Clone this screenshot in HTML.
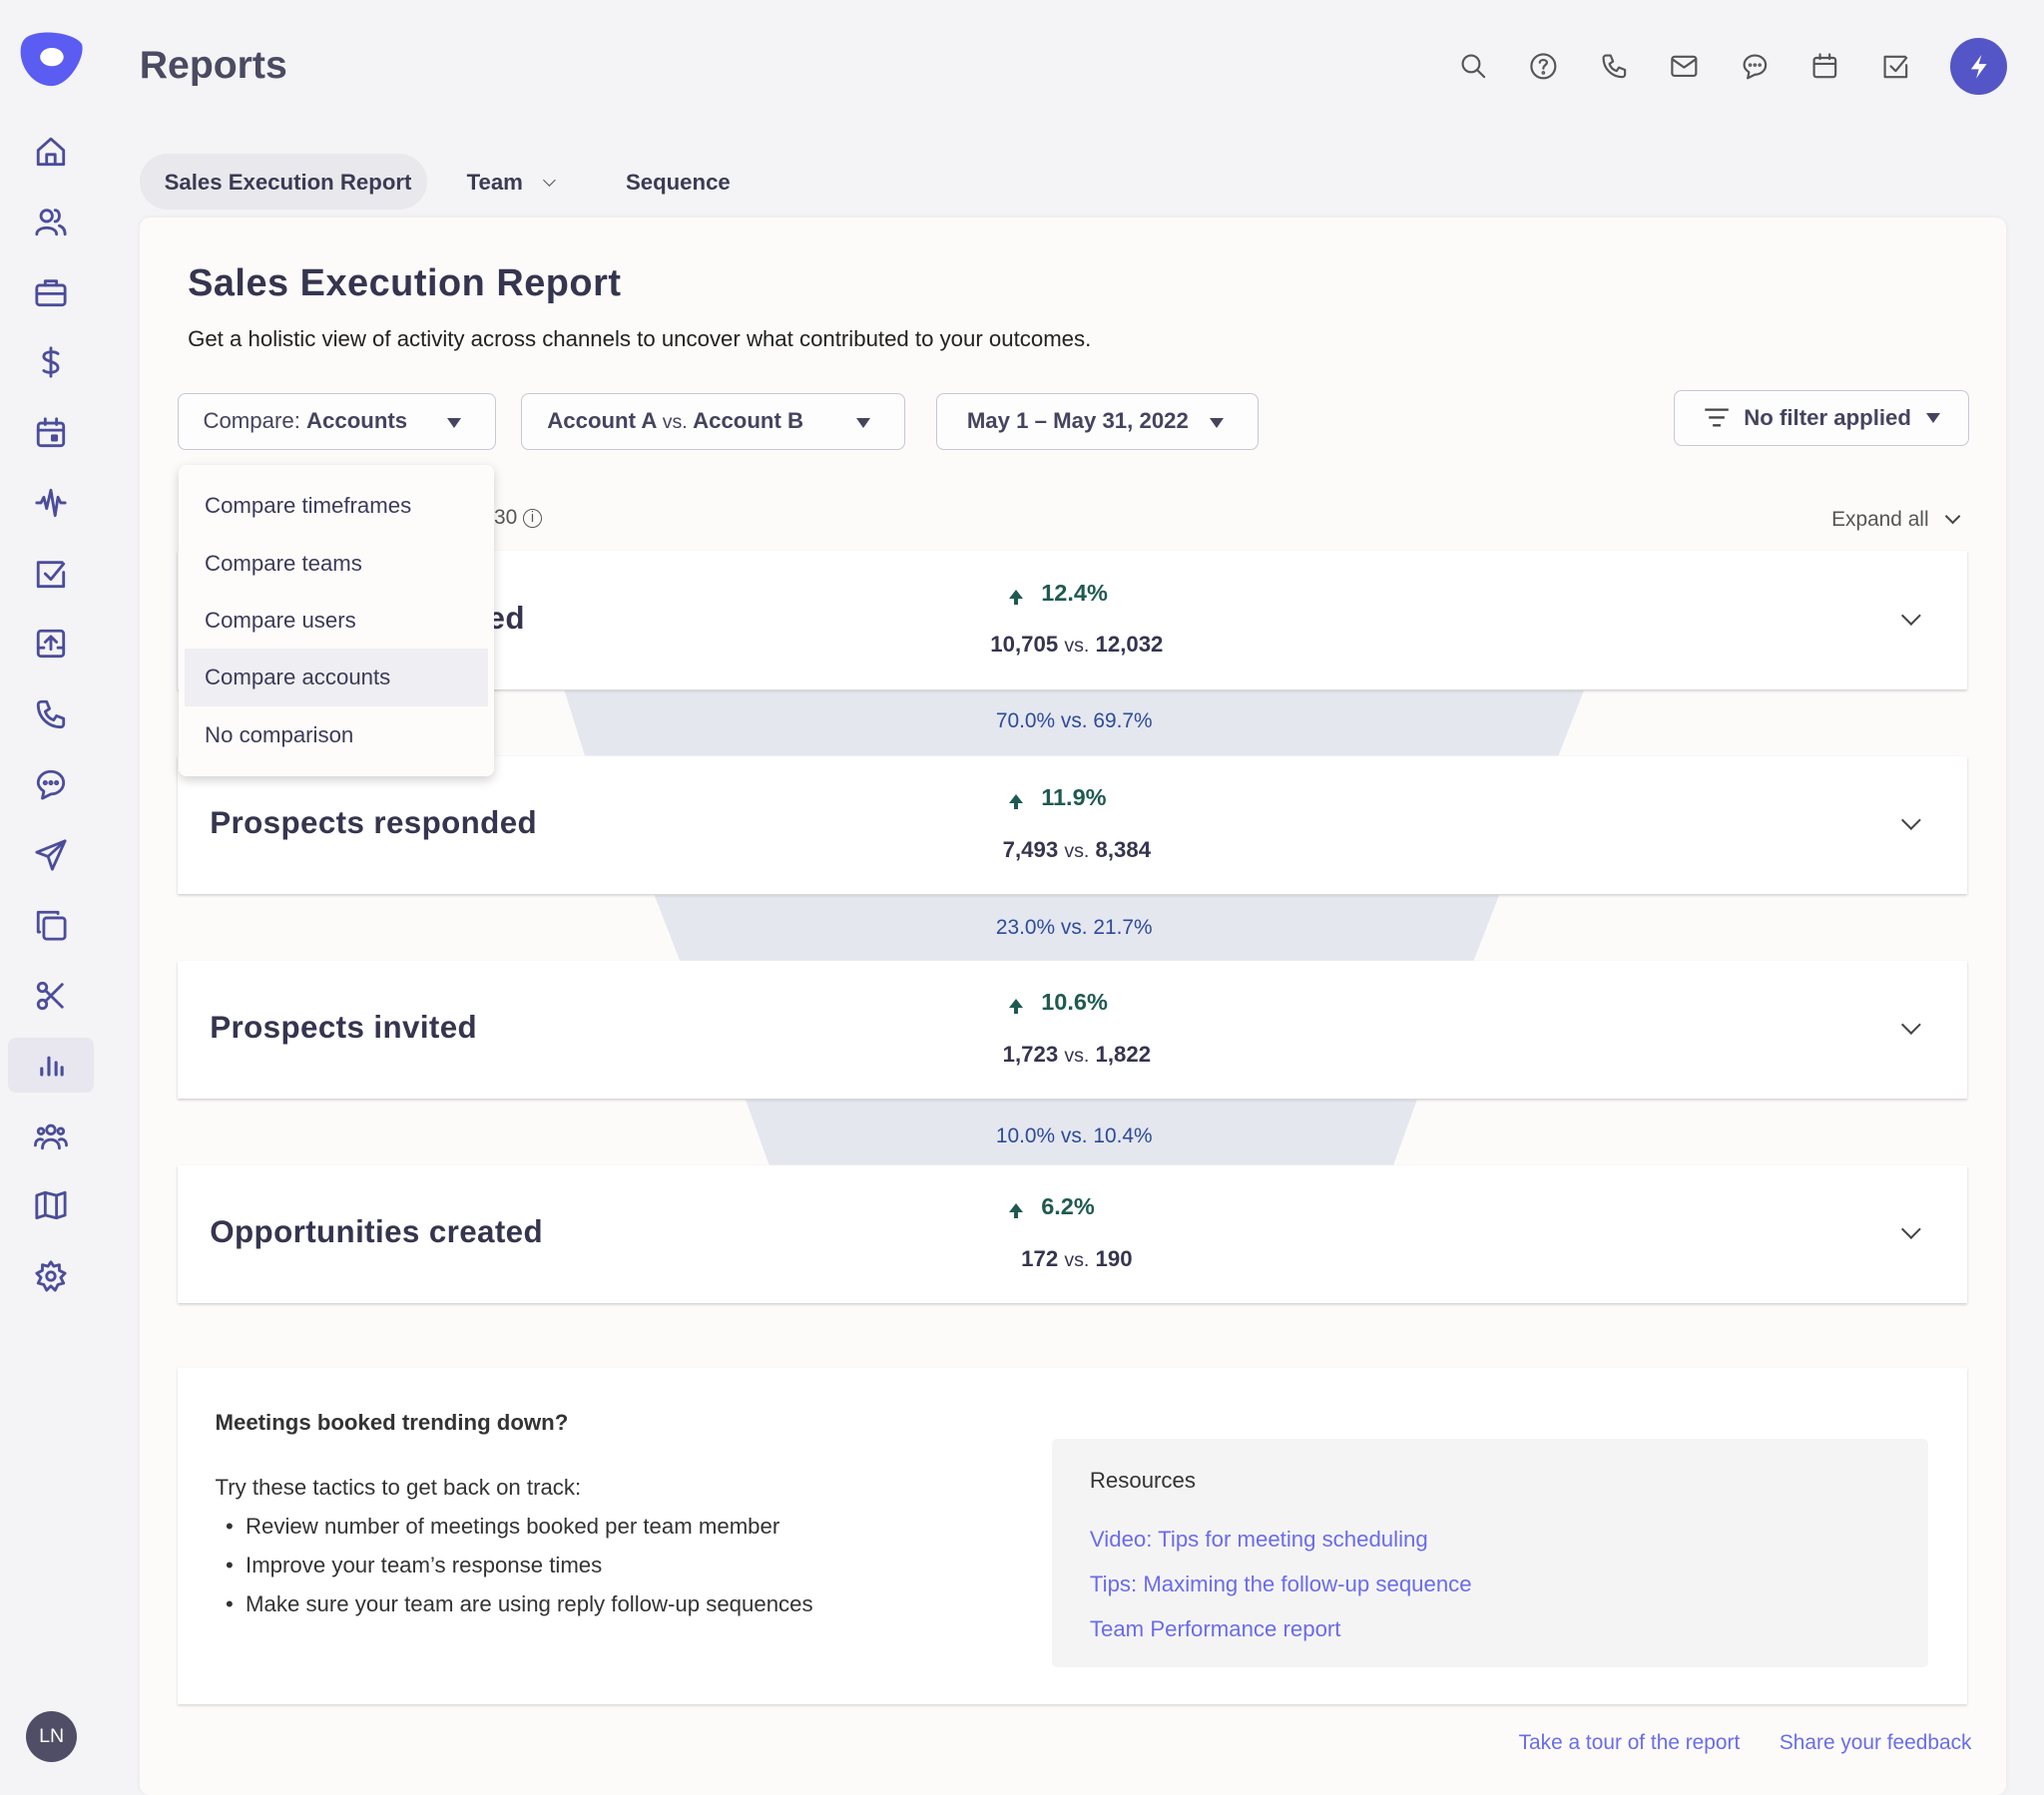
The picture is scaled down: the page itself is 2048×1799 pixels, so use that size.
<!DOCTYPE html>
<html><head><meta charset="utf-8"><style>
html{zoom:1.30612}
body{margin:0;width:1568px;height:1367px;background:#f4f3f5;font-family:"Liberation Sans",sans-serif;color:#3a3956;position:relative;overflow:hidden}
.abs{position:absolute}
.side svg{position:absolute;left:26px;width:26px;height:26px;fill:none;stroke:#4b4d9a;stroke-width:2;stroke-linecap:round;stroke-linejoin:round}
.top svg{position:absolute;top:40px;width:22px;height:22px;fill:none;stroke:#555;stroke-width:1.8;stroke-linecap:round;stroke-linejoin:round}
.card{position:absolute;left:107px;top:167px;width:1432px;height:1210px;background:#fcfbfa;border-radius:8px;box-shadow:0 0 4px rgba(0,0,0,.06)}
.sel{position:absolute;top:302px;height:42px;border:1px solid #c9c8d4;border-radius:6px;background:#fdfdfd;font-size:17px;line-height:42px;color:#45445f}
.tri{position:absolute;top:18px;width:0;height:0;border-left:6px solid transparent;border-right:6px solid transparent;border-top:8px solid #45445f}
.row{position:absolute;left:136px;width:1373px;height:106px;background:#fff;box-shadow:0 1px 2px rgba(0,0,0,.18)}
.row .t{position:absolute;left:25px;top:38px;font-size:24px;font-weight:bold;color:#36354f;letter-spacing:.3px}
.row .p{position:absolute;left:638px;top:22px;width:100px;font-size:18px;font-weight:bold;color:#1f5a51}
.row .v{position:absolute;left:570px;width:240px;top:62px;text-align:center;font-size:17px;font-weight:bold;color:#36354f}
.row .v span{font-weight:normal;font-size:15px}
.row .c{position:absolute;right:38px;top:44px;width:9px;height:9px;border-right:2px solid #444;border-bottom:2px solid #444;transform:rotate(45deg)}
.arr{display:inline-block;width:0;height:0;border-left:6px solid transparent;border-right:6px solid transparent;border-bottom:7px solid #1f5a51;position:relative;top:-2px;margin-right:14px}
.arr:after{content:"";position:absolute;left:-1.5px;top:6px;width:3px;height:6px;background:#1f5a51}
.band{position:absolute;background:#e5e7ef}
.pct{position:absolute;left:700px;width:248px;text-align:center;font-size:16px;color:#2d4b9a}
.menu div{height:44px;line-height:44px;padding-left:20px;font-size:17px;color:#3c3b58}
a{color:#6a6cec;text-decoration:none}
</style></head><body>
<svg class="abs" style="left:14px;top:24px" width="52" height="44" viewBox="0 0 52 44"><path d="M8 4 C20 -2 44 2 49 10 C52 20 40 40 28 42 C14 44 2 30 2 16 C2 10 4 6 8 4Z" fill="#5b5cf2"/><ellipse cx="26" cy="20" rx="9" ry="7" fill="#fff"/></svg>
<div class="abs" style="left:107px;top:34px;font-size:30px;font-weight:bold;color:#4a4a62">Reports</div>
<div class="side">
<svg style="top:103px" viewBox="0 0 24 24"><path d="M3 11 L12 3 L21 11 V21 H3Z M9 21 V14 H15 V21"/></svg>
<svg style="top:157px" viewBox="0 0 24 24"><circle cx="9" cy="8" r="4"/><path d="M2 21 C2 15 16 15 16 21 M15 4 C19 4 19 12 15 12 M18 15 C21 16 22 18 22 21"/></svg>
<svg style="top:211px" viewBox="0 0 24 24"><rect x="2" y="7" width="20" height="14" rx="2"/><path d="M8 7 V4 H16 V7 M2 13 H22"/></svg>
<svg style="top:265px" viewBox="0 0 24 24"><path d="M17 6 C15 4 7 4 7 8 C7 12 17 11 17 16 C17 20 9 20 7 18 M12 2 V22"/></svg>
<svg style="top:319px" viewBox="0 0 24 24"><rect x="3" y="5" width="18" height="16" rx="2"/><path d="M3 10 H21 M8 2 V6 M16 2 V6"/><rect x="13" y="14" width="3" height="3" fill="#4b4d9a"/></svg>
<svg style="top:373px" viewBox="0 0 24 24"><path d="M2 12 H5 L7 8 L9 16 L12 3 L15 21 L17 8 L19 12 H22"/></svg>
<svg style="top:427px" viewBox="0 0 24 24"><path d="M20 4 H3 V21 H21 V11 M8 12 L12 16 L21 5"/></svg>
<svg style="top:481px" viewBox="0 0 24 24"><rect x="3" y="3" width="18" height="18" rx="2"/><path d="M12 16 V8 M8 11 L12 7 L16 11 M3 15 H7 M17 15 H21"/></svg>
<svg style="top:535px" viewBox="0 0 24 24"><path d="M5 3 H9 L11 8 L8 10 C9 13 11 15 14 16 L16 13 L21 15 V19 C21 20 20 21 19 21 C10 21 3 14 3 5 C3 4 4 3 5 3Z"/></svg>
<svg style="top:589px" viewBox="0 0 24 24"><path d="M12 3 C17 3 21 6.5 21 11 C21 15.5 17 19 12 19 L6 22 L7 17 C4 15 3 13 3 11 C3 6.5 7 3 12 3Z"/><circle cx="8" cy="11" r=".8"/><circle cx="12" cy="11" r=".8"/><circle cx="16" cy="11" r=".8"/></svg>
<svg style="top:643px" viewBox="0 0 24 24"><path d="M22 2 L2 10 L10 13 L13 22Z M10 13 L22 2"/></svg>
<svg style="top:697px" viewBox="0 0 24 24"><rect x="7" y="7" width="15" height="15" rx="2"/><path d="M4 17 H3 V3 H17 V4"/></svg>
<svg style="top:751px" viewBox="0 0 24 24"><circle cx="6" cy="6" r="3"/><circle cx="6" cy="18" r="3"/><path d="M8 8 L20 20 M8 16 L20 4"/></svg>
</div>
<div class="abs" style="left:6px;top:796px;width:66px;height:42px;background:#e8e7f0;border-radius:6px"></div>
<svg class="abs" style="left:28px;top:806px" width="22" height="22" viewBox="0 0 24 24" fill="none" stroke="#4b4d9a" stroke-width="2.6" stroke-linecap="round"><path d="M4 20 V15 M10 20 V6 M16 20 V10 M21 20 V14"/></svg>
<div class="side">
<svg style="top:858px" viewBox="0 0 24 24"><circle cx="12" cy="8" r="3"/><circle cx="5" cy="9" r="2"/><circle cx="19" cy="9" r="2"/><path d="M6 21 C6 13 18 13 18 21 M1 19 C1 15 4 14 6 15 M23 19 C23 15 20 14 18 15"/></svg>
<svg style="top:912px" viewBox="0 0 24 24"><path d="M2 5 L8 3 L16 5 L22 3 V19 L16 21 L8 19 L2 21Z M8 3 V19 M16 5 V21"/></svg>
<svg style="top:966px" viewBox="0 0 24 24"><circle cx="12" cy="12" r="3"/><path d="M12 2 L14 5 L18 4 L18 8 L22 10 L19 13 L21 17 L17 18 L15 22 L12 19 L9 22 L7 18 L3 17 L5 13 L2 10 L6 8 L6 4 L10 5Z"/></svg>
</div>
<div class="abs" style="left:20px;top:1313px;width:39px;height:39px;border-radius:50%;background:#4f4e66;color:#fff;font-size:15px;line-height:39px;text-align:center">LN</div>
<div class="top">
<svg style="left:1119px" viewBox="0 0 24 24"><circle cx="10" cy="10" r="7"/><path d="M15 15 L21 21"/></svg>
<svg style="left:1173px" viewBox="0 0 24 24"><circle cx="12" cy="12" r="10"/><path d="M9 9 C9 6 15 6 15 9 C15 11 12 11 12 14"/><circle cx="12" cy="17.5" r=".6"/></svg>
<svg style="left:1227px" viewBox="0 0 24 24"><path d="M5 3 H9 L11 8 L8 10 C9 13 11 15 14 16 L16 13 L21 15 V19 C21 20 20 21 19 21 C10 21 3 14 3 5 C3 4 4 3 5 3Z"/></svg>
<svg style="left:1281px" viewBox="0 0 24 24"><rect x="2" y="4" width="20" height="16" rx="2"/><path d="M2 6 L12 13 L22 6"/></svg>
<svg style="left:1335px" viewBox="0 0 24 24"><path d="M12 3 C17 3 21 6.5 21 11 C21 15.5 17 19 12 19 L6 22 L7 17 C4 15 3 13 3 11 C3 6.5 7 3 12 3Z"/><circle cx="8" cy="11" r=".6"/><circle cx="12" cy="11" r=".6"/><circle cx="16" cy="11" r=".6"/></svg>
<svg style="left:1389px" viewBox="0 0 24 24"><rect x="3" y="5" width="18" height="16" rx="2"/><path d="M3 10 H21 M8 2 V6 M16 2 V6"/></svg>
<svg style="left:1443px" viewBox="0 0 24 24"><path d="M20 4 H3 V21 H21 V11 M8 12 L12 16 L21 5"/></svg>
</div>
<div class="abs" style="left:1496px;top:29px;width:44px;height:44px;border-radius:50%;background:#5456c7"><svg width="44" height="44" viewBox="0 0 44 44"><path d="M24 13 L16 24 H22 L20 31 L28 20 H22Z" fill="#fff"/></svg></div>
<div class="abs" style="left:107px;top:118px;width:221px;height:43px;background:#e9e8ec;border-radius:22px"></div>
<div class="abs" style="left:126px;top:130px;font-size:17px;font-weight:bold;color:#3c3b55">Sales Execution Report</div>
<div class="abs" style="left:358px;top:130px;font-size:17px;font-weight:bold;color:#3c3b55">Team <span style="display:inline-block;width:6px;height:6px;border-right:1.5px solid #444;border-bottom:1.5px solid #444;transform:rotate(45deg);margin-left:12px;position:relative;top:-4px"></span></div>
<div class="abs" style="left:480px;top:130px;font-size:17px;font-weight:bold;color:#3c3b55">Sequence</div>
<div class="card"></div>
<div class="abs" style="left:144px;top:201px;font-size:29px;font-weight:bold;color:#36354f;letter-spacing:.4px">Sales Execution Report</div>
<div class="abs" style="left:144px;top:250px;font-size:17px;color:#222">Get a holistic view of activity across channels to uncover what contributed to your outcomes.</div>
<div class="sel" style="left:136px;width:243px"><span style="margin-left:19px">Compare: <span style="font-weight:bold">Accounts</span></span><div class="tri" style="left:206px"></div></div>
<div class="sel" style="left:400px;width:293px"><span style="margin-left:19px;font-weight:bold">Account A <span style="font-weight:normal;font-size:15px">vs.</span> Account B</span><div class="tri" style="left:256px"></div></div>
<div class="sel" style="left:718px;width:246px"><span style="margin-left:23px;font-weight:bold">May 1 – May 31, 2022</span><div class="tri" style="left:209px"></div></div>
<div class="sel" style="left:1284px;top:299px;width:225px;font-weight:bold"><svg style="position:absolute;left:22px;top:13px" width="20" height="16" viewBox="0 0 20 16" stroke="#444" stroke-width="1.8"><path d="M1 2 H19 M4 8 H16 M7 14 H13"/></svg><span style="margin-left:53px">No filter applied</span><div class="tri" style="left:193px;top:17px"></div></div>
<div class="abs" style="left:379px;top:388px;font-size:16px;color:#555">30 <span style="display:inline-block;width:13px;height:13px;border:1.5px solid #555;border-radius:50%;font-size:11px;line-height:13px;text-align:center;vertical-align:middle">i</span></div>
<div class="abs" style="left:1405px;top:390px;font-size:16px;color:#555">Expand all <span style="display:inline-block;width:7px;height:7px;border-right:2px solid #444;border-bottom:2px solid #444;transform:rotate(45deg);margin-left:10px;position:relative;top:-3px"></span></div>

<div class="band" style="left:433px;top:530px;width:782px;height:50px;clip-path:polygon(0 0,100% 0,97.5% 100%,2% 100%)"></div>
<div class="band" style="left:502px;top:687px;width:648px;height:50px;clip-path:polygon(0 0,100% 0,97% 100%,3% 100%)"></div>
<div class="band" style="left:572px;top:844px;width:515px;height:50px;clip-path:polygon(0 0,100% 0,96.5% 100%,3.5% 100%)"></div>
<div class="pct" style="top:544px">70.0% vs. 69.7%</div>
<div class="pct" style="top:703px">23.0% vs. 21.7%</div>
<div class="pct" style="top:863px">10.0% vs. 10.4%</div>

<div class="row" style="top:423px"><div class="t">Prospects contacted</div><div class="p"><span class="arr"></span>12.4%</div><div class="v">10,705 <span>vs.</span> 12,032</div><div class="c"></div></div>
<div class="row" style="top:580px"><div class="t">Prospects responded</div><div class="p"><span class="arr"></span>11.9%</div><div class="v">7,493 <span>vs.</span> 8,384</div><div class="c"></div></div>
<div class="row" style="top:737px"><div class="t">Prospects invited</div><div class="p"><span class="arr"></span>10.6%</div><div class="v">1,723 <span>vs.</span> 1,822</div><div class="c"></div></div>
<div class="row" style="top:894px"><div class="t">Opportunities created</div><div class="p"><span class="arr"></span>6.2%</div><div class="v">172 <span>vs.</span> 190</div><div class="c"></div></div>

<div class="menu abs" style="left:137px;top:357px;width:242px;height:239px;background:#fdfcfb;border-radius:6px;box-shadow:0 3px 8px rgba(0,0,0,.18);padding-top:9px;box-sizing:border-box">
<div>Compare timeframes</div><div>Compare teams</div><div>Compare users</div><div style="background:#efeef2;margin:0 5px;padding-left:15px">Compare accounts</div><div>No comparison</div></div>

<div class="abs" style="left:136px;top:1050px;width:1373px;height:258px;background:#fff;box-shadow:0 1px 2px rgba(0,0,0,.15)"></div>
<div class="abs" style="left:165px;top:1082px;font-size:17px;font-weight:bold;color:#333">Meetings booked trending down?</div>
<div class="abs" style="left:165px;top:1126px;font-size:17px;color:#333;line-height:30px">Try these tactics to get back on track:<br>
<span style="margin-left:8px">•&nbsp; Review number of meetings booked per team member</span><br>
<span style="margin-left:8px">•&nbsp; Improve your team’s response times</span><br>
<span style="margin-left:8px">•&nbsp; Make sure your team are using reply follow-up sequences</span></div>
<div class="abs" style="left:807px;top:1104px;width:672px;height:175px;background:#f5f4f5;border-radius:4px"></div>
<div class="abs" style="left:836px;top:1126px;font-size:17px;color:#333">Resources</div>
<div class="abs" style="left:836px;top:1164px;font-size:17px;line-height:34.5px"><a>Video: Tips for meeting scheduling</a><br><a>Tips: Maximing the follow-up sequence</a><br><a>Team Performance report</a></div>
<div class="abs" style="left:1165px;top:1328px;font-size:16px"><a>Take a tour of the report</a></div>
<div class="abs" style="left:1365px;top:1328px;font-size:16px"><a>Share your feedback</a></div>
</body></html>
